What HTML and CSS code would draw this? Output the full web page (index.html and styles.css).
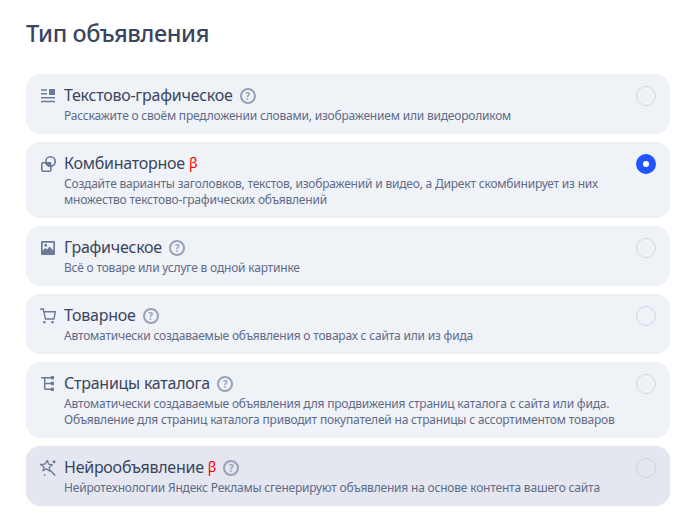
FILE: index.html
```html
<!DOCTYPE html>
<html lang="ru">

<head>
    <meta charset="UTF-8">
    <title>Тип объявления</title>
    <link rel="stylesheet" href="styles.css">
</head>

<body>
    <h1 class="title">Тип объявления</h1>
    <div class="list">
        <div class="card">
            <svg class="icon" viewBox="0 0 16 16"><path d="M1 1.200h6v1.500h-6zM1 5h6v1.500h-6zM1 9h14v1.500h-14zM1 12.800h14v1.500h-14zM9 1h6v6h-6z" fill="#6c7a99"/></svg>
            <div class="text">
                <div class="head"><span>Текстово-графическое</span><span class="hint">?</span></div>
                <p>Расскажите о своём предложении словами, изображением или видеороликом</p>
            </div>
            <span class="radio"></span>
        </div>
        <div class="card">
            <svg class="icon" viewBox="0 0 16 16">
                <clipPath id="combo-clip"><rect x="1" y="6" width="10" height="10"/></clipPath>
                <rect x="1.800" y="6.800" width="9" height="8.400" rx="1.200" fill="none" stroke="#6c7a99" stroke-width="1.600"/>
                <circle cx="10.500" cy="5.500" r="4.700" fill="none" stroke="#6c7a99" stroke-width="1.600"/>
                <circle cx="10.500" cy="5.500" r="5.500" fill="#6c7a99" clip-path="url(#combo-clip)"/>
            </svg>
            <div class="text">
                <div class="head"><span>Комбинаторное</span><span class="beta">β</span></div>
                <p>Создайте варианты заголовков, текстов, изображений и видео, а Директ скомбинирует из них<br>множество текстово-графических объявлений</p>
            </div>
            <span class="radio checked"></span>
        </div>
        <div class="card">
            <svg class="icon" viewBox="0 0 16 16"><path fill-rule="evenodd" d="M2 1h12a1 1 0 0 1 1 1v12a1 1 0 0 1-1 1h-12a1 1 0 0 1-1-1v-12a1 1 0 0 1 1-1zM2.700 2.700v7.800l2.500-2.500 2 1.500 2.300-3 3.800 4v-7.800zM5.700 3.800a1.500 1.500 0 1 1 0 3a1.500 1.500 0 0 1 0-3z" fill="#6c7a99"/></svg>
            <div class="text">
                <div class="head"><span>Графическое</span><span class="hint">?</span></div>
                <p>Всё о товаре или услуге в одной картинке</p>
            </div>
            <span class="radio"></span>
        </div>
        <div class="card">
            <svg class="icon" viewBox="0 0 16 16"><path d="M0 1h3.200l2.300 10h8.500l1.300-7.300h-11" fill="none" stroke="#6c7a99" stroke-width="1.400"/><circle cx="4.300" cy="14.300" r="1.200" fill="#6c7a99"/><circle cx="12.500" cy="14.300" r="1.200" fill="#6c7a99"/></svg>
            <div class="text">
                <div class="head"><span>Товарное</span><span class="hint">?</span></div>
                <p>Автоматически создаваемые объявления о товарах с сайта или из фида</p>
            </div>
            <span class="radio"></span>
        </div>
        <div class="card">
            <svg class="icon" viewBox="0 0 16 16"><path d="M1 1.700h11M4.700 1.700v11.600M4.700 7.500h7.300M4.700 13.300h7.300" fill="none" stroke="#6c7a99" stroke-width="1.500"/><rect x="10.800" y="0" width="3.200" height="3.400" rx=".8" fill="#6c7a99"/><rect x="10.800" y="5.800" width="3.200" height="3.400" rx=".8" fill="#6c7a99"/><rect x="10.800" y="11.600" width="3.200" height="3.400" rx=".8" fill="#6c7a99"/></svg>
            <div class="text">
                <div class="head"><span>Страницы каталога</span><span class="hint">?</span></div>
                <p>Автоматически создаваемые объявления для продвижения страниц каталога с сайта или фида.<br>Объявление для страниц каталога приводит покупателей на страницы с ассортиментом товаров</p>
            </div>
            <span class="radio"></span>
        </div>
        <div class="card dark">
            <svg class="icon" viewBox="0 0 16 16"><path d="M7.500 .5l1 3.700 4 .6-3.200 2.400.5 4-3.300-2.300-3.500 1.900 1.100-3.800-3.500-2.600 4-.2z" fill="none" stroke="#6c7a99" stroke-width="1.300" stroke-linejoin="round"/><path d="M10 10.200l5.300 5.300" fill="none" stroke="#6c7a99" stroke-width="1.500"/><circle cx="14" cy="1.800" r="1.500" fill="#6c7a99"/><circle cx="4.500" cy="14.800" r=".9" fill="#6c7a99"/></svg>
            <div class="text">
                <div class="head"><span>Нейрообъявление</span><span class="beta">β</span><span class="hint">?</span></div>
                <p>Нейротехнологии Яндекс Рекламы сгенерируют объявления на основе контента вашего сайта</p>
            </div>
            <span class="radio"></span>
        </div>
    </div>
</body>

</html>
```

FILE: styles.css
```css
body {
    margin: 0;
    padding: 0 13px 0 26px;
    background-color: #fff;
    color: #3a4560;
    font-family: "Noto Sans", sans-serif;
}

.title {
    margin: 0;
    padding-top: 18px;
    font-size: 23.500px;
    line-height: 30px;
    font-weight: 500;
    letter-spacing: -0.4px;
}

.list {
    display: flex;
    flex-direction: column;
    gap: 8px;
    margin-top: 26px;
}

.card {
    display: flex;
    align-items: flex-start;
    padding: 12px 14px 10px 14px;
    background: #eff2f7;
    border-radius: 14px;
}

.card.dark {
    background: #e4e7f0;
}

.icon {
    flex: none;
    width: 16px;
    height: 16px;
    margin: 2px 8px 0 0;
}

.text {
    flex: 1;
    min-width: 0;
}

.head {
    display: flex;
    align-items: center;
    gap: 7px;
    margin-top: -1px;
    font-size: 16px;
    line-height: 20px;
    letter-spacing: -0.25px;
}

.text p {
    margin: 3px 0 0;
    color: #5f6b87;
    font-size: 12px;
    line-height: 16px;
    letter-spacing: -0.2px;
    white-space: nowrap;
}

.beta {
    color: #f00;
    margin-left: -3px;
    font-size: 14px;
}

.hint {
    display: inline-flex;
    align-items: center;
    justify-content: center;
    box-sizing: border-box;
    width: 16px;
    height: 16px;
    margin-top: 2px;
    border: 2px solid #98a2b8;
    border-radius: 50%;
    color: #98a2b8;
    font-size: 10px;
    line-height: 1;
    font-weight: 700;
}

.radio {
    flex: none;
    box-sizing: border-box;
    width: 20px;
    height: 20px;
    margin: 0 0 0 10px;
    border: 1px solid #d0d5e0;
    border-radius: 50%;
}

.radio.checked {
    border: 7px solid #2352ff;
    background: #fff;
}
```
